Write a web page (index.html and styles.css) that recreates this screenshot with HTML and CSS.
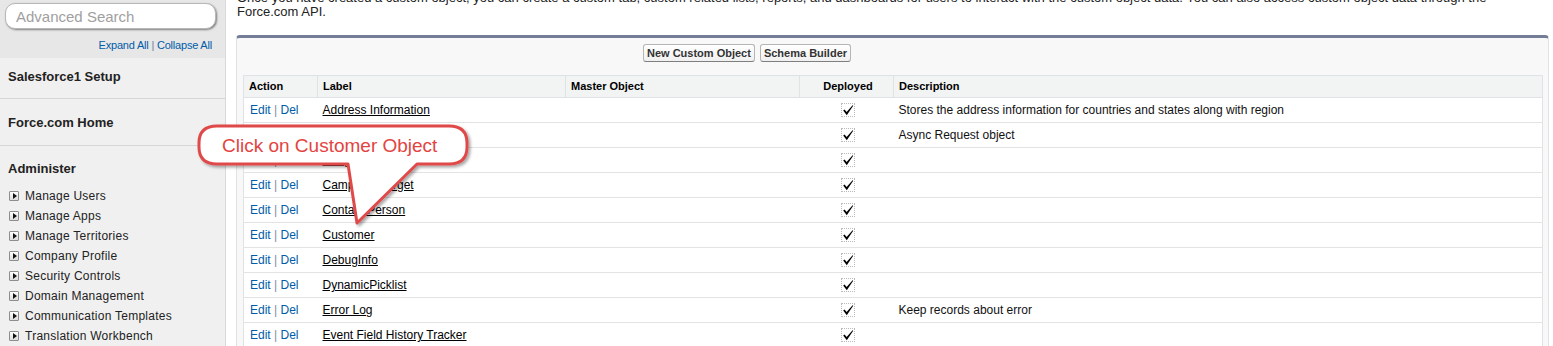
FILE: index.html
```html
<!DOCTYPE html>
<html>
<head>
    <title>Custom Objects</title>
    <meta charset="UTF-8">
    <link rel="stylesheet" href="styles.css">
</head>
<body>
    <div class="page">
        <div class="sidebar">
            <div class="search-area">
                <input type="text" class="search-input" placeholder="Advanced Search">
                <div class="expand-links"><a href="#">Expand All</a> | <a href="#">Collapse All</a></div>
            </div>
            <div class="nav-section first">Salesforce1 Setup</div>
            <div class="nav-section second">Force.com Home</div>
            <div class="nav-group">
                <div class="nav-title">Administer</div>
                <ul class="nav-list">
                    <li><span class="twisty"></span>Manage Users</li>
                    <li><span class="twisty"></span>Manage Apps</li>
                    <li><span class="twisty"></span>Manage Territories</li>
                    <li><span class="twisty"></span>Company Profile</li>
                    <li><span class="twisty"></span>Security Controls</li>
                    <li><span class="twisty"></span>Domain Management</li>
                    <li><span class="twisty"></span>Communication Templates</li>
                    <li><span class="twisty"></span>Translation Workbench</li>
                </ul>
            </div>
        </div>

        <div class="main">
            <p class="intro">Once you have created a custom object, you can create a custom tab, custom related lists, reports, and dashboards for users to interact with the custom object data. You can also access custom object data through the<br>Force.com API.</p>

            <div class="panel">
                <div class="panel-buttons">
                    <button class="btn">New Custom Object</button>
                    <button class="btn">Schema Builder</button>
                </div>
                <table class="list">
                    <colgroup>
                        <col style="width: 74px">
                        <col style="width: 248px">
                        <col style="width: 234px">
                        <col style="width: 94px">
                        <col>
                    </colgroup>
                    <thead>
                        <tr>
                            <th>Action</th>
                            <th>Label</th>
                            <th>Master Object</th>
                            <th class="center">Deployed</th>
                            <th>Description</th>
                        </tr>
                    </thead>
                    <tbody>
                        <tr>
                            <td class="actions"><a href="#">Edit</a> <span class="sep">|</span> <a href="#">Del</a></td>
                            <td><a class="label-link" href="#">Address Information</a></td>
                            <td></td>
                            <td class="center"><span class="check"><svg width="12" height="12" viewBox="0 0 12 12"><path d="M1.2 6.6 L2.6 5.4 L4.6 8 L10.6 1.2 L11.2 1.8 L4.8 11.2 Z" fill="#000"/></svg></span></td>
                            <td>Stores the address information for countries and states along with region</td>
                        </tr>
                        <tr>
                            <td class="actions"><a href="#">Edit</a> <span class="sep">|</span> <a href="#">Del</a></td>
                            <td><a class="label-link" href="#">Async Request</a></td>
                            <td></td>
                            <td class="center"><span class="check"><svg width="12" height="12" viewBox="0 0 12 12"><path d="M1.2 6.6 L2.6 5.4 L4.6 8 L10.6 1.2 L11.2 1.8 L4.8 11.2 Z" fill="#000"/></svg></span></td>
                            <td>Async Request object</td>
                        </tr>
                        <tr>
                            <td class="actions"><a href="#">Edit</a> <span class="sep">|</span> <a href="#">Del</a></td>
                            <td><a class="label-link" href="#">Budget</a></td>
                            <td></td>
                            <td class="center"><span class="check"><svg width="12" height="12" viewBox="0 0 12 12"><path d="M1.2 6.6 L2.6 5.4 L4.6 8 L10.6 1.2 L11.2 1.8 L4.8 11.2 Z" fill="#000"/></svg></span></td>
                            <td></td>
                        </tr>
                        <tr>
                            <td class="actions"><a href="#">Edit</a> <span class="sep">|</span> <a href="#">Del</a></td>
                            <td><a class="label-link" href="#">Campaign Target</a></td>
                            <td></td>
                            <td class="center"><span class="check"><svg width="12" height="12" viewBox="0 0 12 12"><path d="M1.2 6.6 L2.6 5.4 L4.6 8 L10.6 1.2 L11.2 1.8 L4.8 11.2 Z" fill="#000"/></svg></span></td>
                            <td></td>
                        </tr>
                        <tr>
                            <td class="actions"><a href="#">Edit</a> <span class="sep">|</span> <a href="#">Del</a></td>
                            <td><a class="label-link" href="#">Contact Person</a></td>
                            <td></td>
                            <td class="center"><span class="check"><svg width="12" height="12" viewBox="0 0 12 12"><path d="M1.2 6.6 L2.6 5.4 L4.6 8 L10.6 1.2 L11.2 1.8 L4.8 11.2 Z" fill="#000"/></svg></span></td>
                            <td></td>
                        </tr>
                        <tr>
                            <td class="actions"><a href="#">Edit</a> <span class="sep">|</span> <a href="#">Del</a></td>
                            <td><a class="label-link" href="#">Customer</a></td>
                            <td></td>
                            <td class="center"><span class="check"><svg width="12" height="12" viewBox="0 0 12 12"><path d="M1.2 6.6 L2.6 5.4 L4.6 8 L10.6 1.2 L11.2 1.8 L4.8 11.2 Z" fill="#000"/></svg></span></td>
                            <td></td>
                        </tr>
                        <tr>
                            <td class="actions"><a href="#">Edit</a> <span class="sep">|</span> <a href="#">Del</a></td>
                            <td><a class="label-link" href="#">DebugInfo</a></td>
                            <td></td>
                            <td class="center"><span class="check"><svg width="12" height="12" viewBox="0 0 12 12"><path d="M1.2 6.6 L2.6 5.4 L4.6 8 L10.6 1.2 L11.2 1.8 L4.8 11.2 Z" fill="#000"/></svg></span></td>
                            <td></td>
                        </tr>
                        <tr>
                            <td class="actions"><a href="#">Edit</a> <span class="sep">|</span> <a href="#">Del</a></td>
                            <td><a class="label-link" href="#">DynamicPicklist</a></td>
                            <td></td>
                            <td class="center"><span class="check"><svg width="12" height="12" viewBox="0 0 12 12"><path d="M1.2 6.6 L2.6 5.4 L4.6 8 L10.6 1.2 L11.2 1.8 L4.8 11.2 Z" fill="#000"/></svg></span></td>
                            <td></td>
                        </tr>
                        <tr>
                            <td class="actions"><a href="#">Edit</a> <span class="sep">|</span> <a href="#">Del</a></td>
                            <td><a class="label-link" href="#">Error Log</a></td>
                            <td></td>
                            <td class="center"><span class="check"><svg width="12" height="12" viewBox="0 0 12 12"><path d="M1.2 6.6 L2.6 5.4 L4.6 8 L10.6 1.2 L11.2 1.8 L4.8 11.2 Z" fill="#000"/></svg></span></td>
                            <td>Keep records about error</td>
                        </tr>
                        <tr>
                            <td class="actions"><a href="#">Edit</a> <span class="sep">|</span> <a href="#">Del</a></td>
                            <td><a class="label-link" href="#">Event Field History Tracker</a></td>
                            <td></td>
                            <td class="center"><span class="check"><svg width="12" height="12" viewBox="0 0 12 12"><path d="M1.2 6.6 L2.6 5.4 L4.6 8 L10.6 1.2 L11.2 1.8 L4.8 11.2 Z" fill="#000"/></svg></span></td>
                            <td></td>
                        </tr>
                    </tbody>
                </table>
            </div>
        </div>

        <!-- annotation bubble drawn over the list -->
        <svg class="callout" width="290" height="110" viewBox="0 0 290 110">
            <defs>
                <filter id="shadow" x="-10%" y="-10%" width="130%" height="140%">
                    <feDropShadow dx="2" dy="2" stdDeviation="1.5" flood-color="#000" flood-opacity="0.35"/>
                </filter>
            </defs>
            <path d="M22,4 H254 Q272,4 272,21 V25 Q272,42 254,42 H222 L162,101 L153,42 H22 Q4,42 4,25 V21 Q4,4 22,4 Z"
                  fill="#fff" stroke="#e04a48" stroke-width="3" stroke-linejoin="round" filter="url(#shadow)"/>
            <text x="27" y="30" class="callout-text">Click on Customer Object</text>
        </svg>
    </div>
</body>
</html>
```

FILE: styles.css
```css
:root {
    --link-blue: #015ba7;
    --sidebar-bg: #f0f0f0;
    --line: #e3e3e3;
}

body {
    margin: 0;
    font-family: 'Liberation Sans', Arial, sans-serif;
    font-size: 12px;
    color: #222;
    background-color: #fff;
    overflow: hidden;
}

.page {
    position: relative;
    display: flex;
    height: 346px;
    overflow: hidden;
}

/* sidebar */

.sidebar {
    width: 225px;
    flex-shrink: 0;
    background-color: var(--sidebar-bg);
    border-right: 1px solid #d9d9d9;
}

.search-area {
    background-color: #e7e7e7;
    padding: 3px 9px 6px 5px;
}

.search-input {
    display: block;
    width: 211px;
    height: 26px;
    box-sizing: border-box;
    border: 1px solid #b8b8b8;
    border-radius: 10px;
    box-shadow: 1px 1px 2px rgba(0, 0, 0, 0.45);
    padding: 0 10px;
    font-family: 'Liberation Sans', Arial, sans-serif;
    font-size: 15px;
    color: #333;
    background-color: #fff;
}

.search-input::placeholder {
    color: #a0a0a0;
}

.expand-links {
    margin-top: 10px;
    text-align: right;
    font-size: 11px;
    line-height: 13px;
    color: #6a7fa0;
    padding-right: 4px;
    letter-spacing: -0.2px;
}

.expand-links a {
    color: var(--link-blue);
    text-decoration: none;
}

.nav-section {
    font-size: 13px;
    font-weight: bold;
    line-height: 16px;
    color: #222;
    padding: 11px 8px 13px;
    border-bottom: 1px solid #d6d6d6;
}

.nav-section.second {
    padding: 16px 8px 14px;
}

.nav-group {
    padding: 15px 0 0;
}

.nav-title {
    font-size: 13px;
    font-weight: bold;
    line-height: 16px;
    padding: 0 8px;
    margin-bottom: 9px;
}

.nav-list {
    list-style: none;
    margin: 0;
    padding: 0 0 0 9px;
}

.nav-list li {
    display: flex;
    align-items: center;
    gap: 6px;
    height: 20px;
    font-size: 12px;
    letter-spacing: 0.25px;
    color: #222;
}

.twisty {
    position: relative;
    width: 8px;
    height: 8px;
    border: 1px solid #8d8d8d;
    border-radius: 1px;
    background: linear-gradient(#ffffff, #dcdcdc);
}

.twisty::after {
    content: "";
    position: absolute;
    left: 3px;
    top: 1px;
    border-left: 4px solid #111;
    border-top: 3px solid transparent;
    border-bottom: 3px solid transparent;
}

/* main content */

.main {
    flex: 1;
    padding: 0 4px 0 10px;
}

.intro {
    margin: -9px 0 16px 1px;
    font-size: 13px;
    line-height: 14px;
    color: #222;
}

.panel {
    background-color: #f8f8f8;
    border: 1px solid #e0e3e5;
    border-top: 3px solid #737d95;
    border-radius: 4px 4px 0 0;
    padding: 6px 5px 0 6px;
}

.panel-buttons {
    display: flex;
    gap: 5px;
    padding-left: 400px;
    margin-bottom: 13px;
}

.btn {
    height: 18px;
    padding: 0 3px;
    font-family: 'Liberation Sans', Arial, sans-serif;
    font-size: 11px;
    font-weight: bold;
    color: #333;
    background: linear-gradient(#ffffff, #f0f0f0);
    border: 1px solid #b5b5b5;
    border-bottom-color: #7f7f7f;
    border-radius: 3px;
    cursor: pointer;
}

.list {
    width: 100%;
    border-collapse: collapse;
    table-layout: fixed;
    background-color: #fff;
    border: 1px solid #e0e3e5;
}

.list th {
    background-color: #f2f3f3;
    border: 1px solid #e0e3e5;
    font-size: 11px;
    font-weight: bold;
    line-height: 13px;
    color: #000;
    text-align: left;
    padding: 4px 2px 4px 5px;
}

.list td {
    height: 14px;
    border-bottom: 1px solid var(--line);
    padding: 5px 2px 5px 5px;
    line-height: 14px;
    color: #111;
    white-space: nowrap;
}

.list .center {
    text-align: center;
}

.list td.actions {
    padding-left: 6px;
}

.actions a {
    color: var(--link-blue);
    text-decoration: none;
}

.sep {
    color: #7d8ea8;
}

.label-link {
    color: #000;
    text-decoration: underline;
}

.check {
    display: block;
    width: 12px;
    height: 12px;
    margin: 0 auto;
    border: 1px dotted #bbb;
    line-height: 0;
}

/* annotation */

.callout {
    position: absolute;
    left: 195px;
    top: 122px;
}

.callout-text {
    font-family: 'Liberation Sans', Arial, sans-serif;
    font-size: 19px;
    fill: #e4443f;
}
```
